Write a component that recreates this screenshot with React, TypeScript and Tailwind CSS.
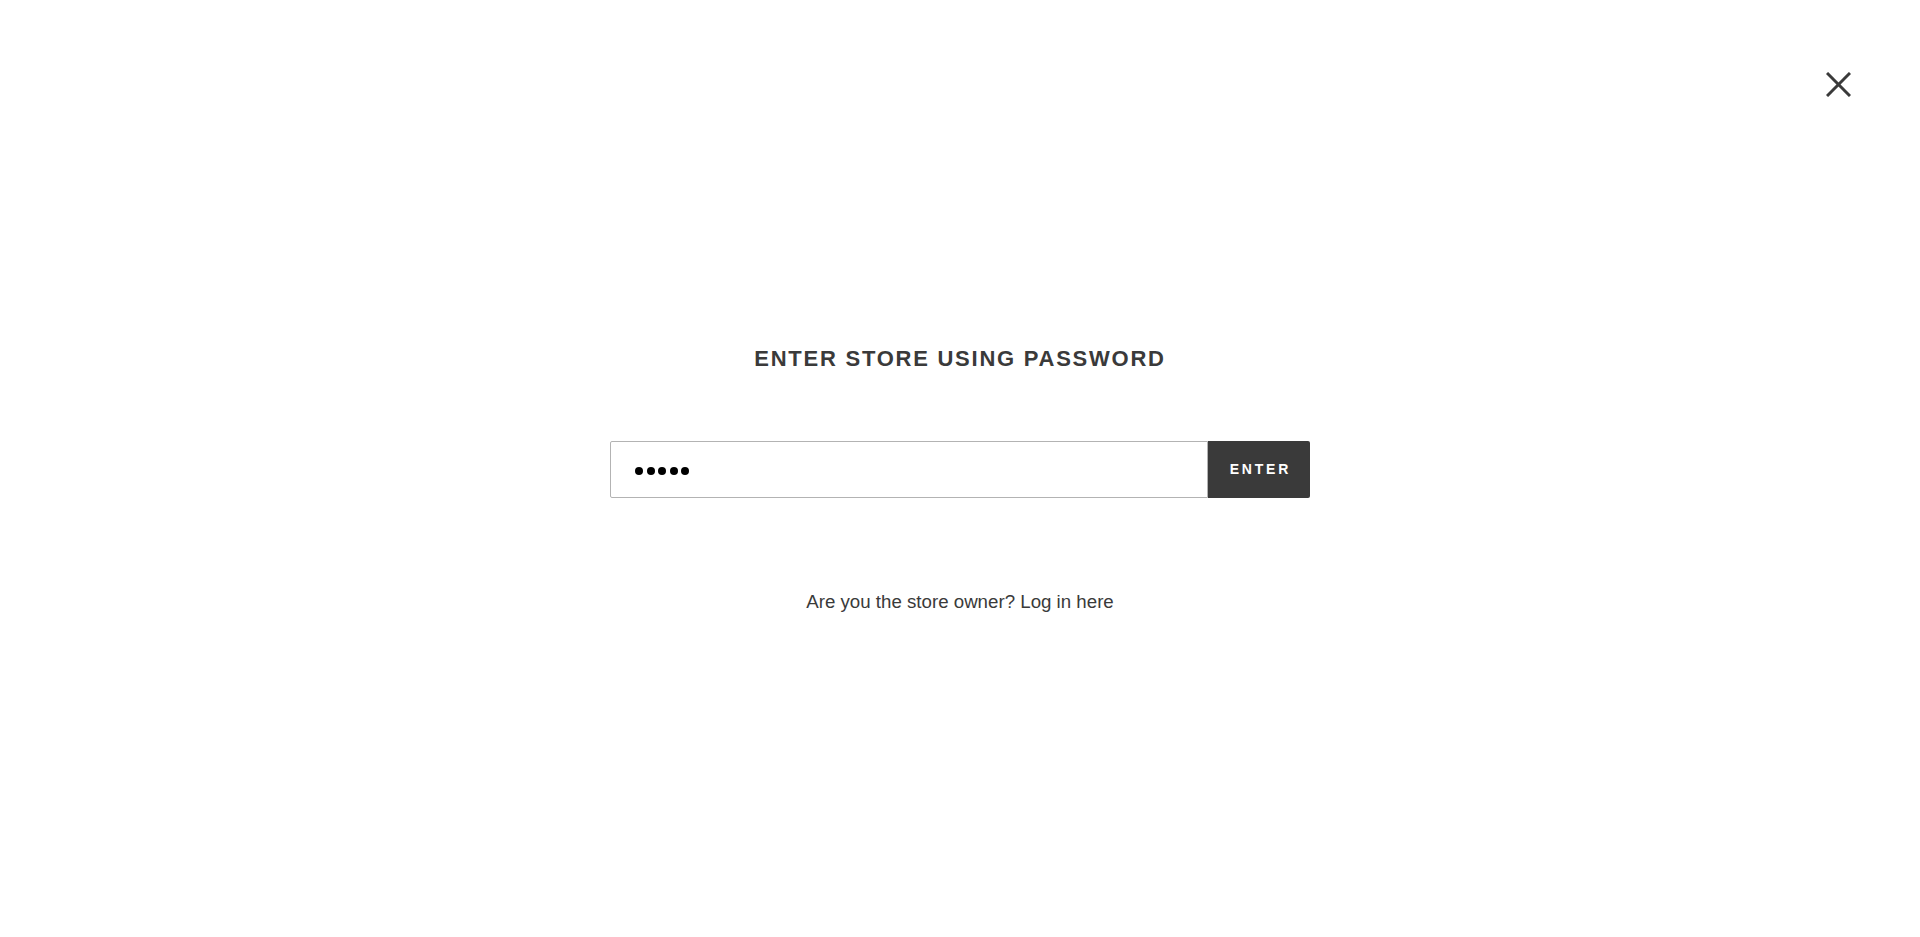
import React from "react";

export default function App() {
  return (
    <div className="min-h-[937px] bg-white text-[#3a3a3a]" style={{ fontFamily: '"Liberation Sans", Arial, sans-serif' }}>
      <div className="flex justify-end pt-[72px] pr-[69px]">
        <button aria-label="Close" className="w-[25px] h-[25px] block">
          <svg viewBox="0 0 25 25" width="25" height="25" fill="none" stroke="#3a3a3a" strokeWidth="3" strokeLinecap="butt">
            <line x1="1" y1="1" x2="24" y2="24" />
            <line x1="24" y1="1" x2="1" y2="24" />
          </svg>
        </button>
      </div>
      <div className="flex flex-col items-center">
        <h2 className="mt-[249px] text-[22px] leading-[26px] font-bold tracking-[1.75px] uppercase text-[#3a3a3a]">
          Enter store using password
        </h2>
        <form className="mt-[69px] flex w-[700px] h-[57px]">
          <div className="flex-1 border border-[#b3b3b3] rounded-l-[2px] flex items-center pl-[24px] pt-[3px]">
            <div className="flex gap-[3.5px]">
              <span className="w-[8px] h-[8px] rounded-full bg-black" />
              <span className="w-[8px] h-[8px] rounded-full bg-black" />
              <span className="w-[8px] h-[8px] rounded-full bg-black" />
              <span className="w-[8px] h-[8px] rounded-full bg-black" />
              <span className="w-[8px] h-[8px] rounded-full bg-black" />
            </div>
          </div>
          <button type="button" className="w-[102px] bg-[#3a3a3a] text-white rounded-r-[2px] text-[14px] font-bold tracking-[2.8px] pl-[2.8px] uppercase">
            Enter
          </button>
        </form>
        <p className="mt-[92px] text-[18.7px] leading-[24px] text-[#3a3a3a]">
          Are you the store owner? <a href="#" className="text-[#3a3a3a]">Log in here</a>
        </p>
      </div>
    </div>
  );
}
